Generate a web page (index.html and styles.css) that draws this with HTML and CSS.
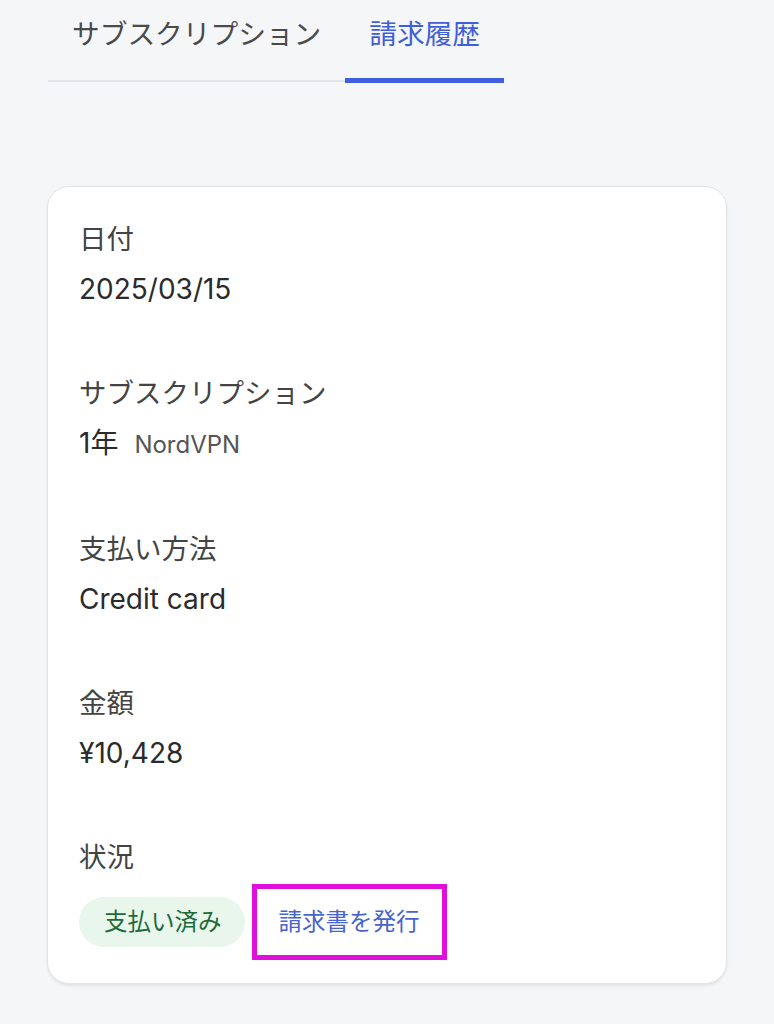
FILE: index.html
```html
<!DOCTYPE html>
<html lang="ja">
	<head>
		<meta charset="utf-8">
		<title>請求履歴</title>
		<link rel="stylesheet" href="styles.css">
	</head>
	<body>
		<div class="page">
			<div class="tabs">
				<div class="tab">サブスクリプション</div>
				<div class="tab tab-active">請求履歴</div>
			</div>

			<div class="card">
				<div class="field">
					<div class="field-label">日付</div>
					<div class="field-value">2025/03/15</div>
				</div>
				<div class="field">
					<div class="field-label">サブスクリプション</div>
					<div class="field-value">1年<span class="field-sub">NordVPN</span></div>
				</div>
				<div class="field">
					<div class="field-label">支払い方法</div>
					<div class="field-value">Credit card</div>
				</div>
				<div class="field">
					<div class="field-label">金額</div>
					<div class="field-value">¥10,428</div>
				</div>
				<div class="field field-last">
					<div class="field-label">状況</div>
					<div class="status-row">
						<span class="badge-paid">支払い済み</span>
						<a class="invoice-link" href="#">請求書を発行</a>
					</div>
				</div>
			</div>
		</div>
	</body>
</html>
```

FILE: styles.css
```css
body
{
	margin: 0;
	background-color: #f5f6f8;
	font-family: Inter, "Noto Sans CJK JP", sans-serif;
	color: #2e2e2e;
}

.page
{
	padding: 0 47px 40px 47px;
}

.tabs
{
	display: flex;
	width: 456px;
	margin-left: 1px;
	padding-top: 16px;
	border-bottom: 2px solid #e3e4e7;
}

.tab
{
	position: relative;
	padding: 0 24px 28px 24px;
	font-size: 27.7px;
	line-height: 36px;
	color: #4a4a4a;
}

.tab-active
{
	color: #3f5fd8;
}

.tab-active::after
{
	content: "";
	position: absolute;
	left: 0;
	right: 0;
	bottom: -3px;
	height: 5px;
	background-color: #3d5fe0;
}

.card
{
	margin-top: 104px;
	padding: 34px 31px 23px 31px;
	background-color: #ffffff;
	border: 1px solid #e4e5e8;
	border-radius: 22px;
	box-shadow: 0 2px 3px rgba(0, 0, 0, 0.08);
}

.field
{
	margin-bottom: 68px;
}

.field-last
{
	margin-bottom: 0;
}

.field-label
{
	font-size: 27.5px;
	line-height: 36px;
	color: #444444;
	margin-bottom: 14px;
}

.field-value
{
	font-size: 28px;
	line-height: 36px;
	color: #2b2b2b;
}

.field-sub
{
	margin-left: 16px;
	font-size: 24px;
	color: #555555;
}

.status-row
{
	display: flex;
	align-items: center;
	gap: 7px;
	margin-top: -5px;
}

.badge-paid
{
	display: inline-block;
	padding: 0 23px 0 25px;
	height: 50px;
	line-height: 50px;
	border-radius: 25px;
	background-color: #e8f6ec;
	color: #1d6a3a;
	font-size: 23.5px;
}

.invoice-link
{
	display: inline-block;
	padding: 0 22px;
	height: 66px;
	line-height: 66px;
	border: 5px solid #e010dc;
	color: #4663cf;
	font-size: 23.5px;
	text-decoration: none;
}
```
